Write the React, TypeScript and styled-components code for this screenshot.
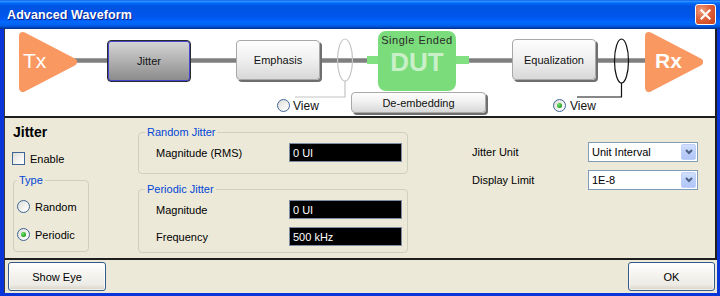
import React from 'react';
import styled, { createGlobalStyle, css } from 'styled-components';

const GlobalStyle = createGlobalStyle`
  * {
    box-sizing: border-box;
  }
  html, body {
    margin: 0;
    padding: 0;
  }
  body {
    width: 720px;
    height: 296px;
    overflow: hidden;
    font-family: "Liberation Sans", Arial, sans-serif;
    font-size: 11px;
    color: #000;
    background: #0831d9;
  }
`;

const Window = styled.div`
  width: 720px;
  height: 296px;
  display: flex;
  flex-direction: column;
`;

const TitleBar = styled.div`
  flex: none;
  height: 29px;
  display: flex;
  align-items: center;
  justify-content: space-between;
  padding: 0 4px 0 7px;
  background: linear-gradient(
    to bottom,
    #0058ee 0%,
    #3593ff 4%,
    #288eff 6%,
    #127dff 8%,
    #036ffc 10%,
    #0262ee 14%,
    #0057e5 20%,
    #0054e3 24%,
    #0055eb 56%,
    #005bf5 66%,
    #026afe 76%,
    #0062ef 86%,
    #0052d6 92%,
    #0040ab 96%,
    #003092 100%
  );
`;

const Title = styled.span`
  color: #fff;
  font-size: 12.5px;
  font-weight: bold;
  letter-spacing: 0.1px;
  text-shadow: 1px 1px 0 #0f1f80;
`;

const CloseButton = styled.div`
  width: 21px;
  height: 21px;
  border: 1px solid #fff;
  border-radius: 3px;
  background: radial-gradient(circle at 30% 30%, #f0a080 0%, #e0613a 45%, #c7401a 100%);
  display: flex;
  align-items: center;
  justify-content: center;
`;

const Frame = styled.div`
  flex: 1;
  display: flex;
  flex-direction: column;
  padding: 0 3px 3px 4px;
  background: #0a35d8;
`;

const panelEdges = css`
  border-left: 1px solid #3a3a3a;
  border-right: 2px solid #1e1e1e;
`;

const Diagram = styled.div`
  ${panelEdges};
  position: relative;
  flex: none;
  height: 89px;
  background: #fff;
  border-bottom: 2px solid #1e1e1e;
  overflow: hidden;
`;

type At = { $x: number; $y: number };

const placed = css<At>`
  position: absolute;
  left: ${(p) => p.$x}px;
  top: ${(p) => p.$y}px;
`;

const Wires = styled.svg`
  position: absolute;
  left: 0;
  top: 0;
`;

const Arrow = styled.svg<At>`
  ${placed};
`;

const BlockButton = styled.div<At & { $w: number; $h: number; $active?: boolean }>`
  ${placed};
  width: ${(p) => p.$w}px;
  height: ${(p) => p.$h}px;
  display: flex;
  align-items: center;
  justify-content: center;
  font-size: 11px;
  color: #111;
  border-radius: 4px;
  ${(p) =>
    p.$active
      ? css`
          background: linear-gradient(to bottom, #d6d6d6 0%, #b4b4b4 45%, #8a8a8a 100%);
          border: 1px solid #2a2a2a;
          box-shadow: inset 0 0 0 1px #4646d6;
        `
      : css`
          background: linear-gradient(to bottom, #fdfdfd 0%, #f1f1f1 45%, #d8d8d8 100%);
          border: 1px solid #a8a8a8;
          box-shadow: 2px 2px 0 #6f6f6f;
        `}
`;

const DutBox = styled.div<At>`
  ${placed};
  width: 78px;
  height: 60px;
  border-radius: 8px;
  background: #7bdc7b;
  display: flex;
  flex-direction: column;
  align-items: center;
  padding-top: 3px;
`;

const DutCaption = styled.span`
  font-size: 11px;
  line-height: 13px;
  letter-spacing: 0.5px;
  color: #2a2a2a;
`;

const DutName = styled.span`
  font-size: 26px;
  line-height: 30px;
  font-weight: bold;
  color: rgba(255, 255, 255, 0.6);
`;

const ViewOption = styled.label<At & { $gap: number }>`
  ${placed};
  display: flex;
  align-items: center;
  gap: ${(p) => p.$gap}px;
  height: 13px;
  font-size: 12px;
  color: #111;
`;

const RadioDot = styled.span<{ $checked?: boolean }>`
  flex: none;
  width: 13px;
  height: 13px;
  border-radius: 50%;
  border: 1px solid #3f6496;
  background: linear-gradient(135deg, #dcdcd7 0%, #f4f4f1 60%, #ffffff 100%);
  display: flex;
  align-items: center;
  justify-content: center;

  &::after {
    content: '';
    display: ${(p) => (p.$checked ? 'block' : 'none')};
    width: 5px;
    height: 5px;
    border-radius: 50%;
    background: radial-gradient(circle at 35% 35%, #6fe36f 0%, #21a121 70%);
  }
`;

const Settings = styled.div`
  ${panelEdges};
  flex: none;
  height: 142px;
  display: grid;
  grid-template-columns: 126px 334px 1fr;
  align-items: start;
  padding: 6px 0 0 7px;
  background: #ece9d8;
  border-bottom: 2px solid #1e1e1e;
`;

const Column = styled.div<{ $top: number; $gap?: number }>`
  display: flex;
  flex-direction: column;
  align-items: flex-start;
  margin-top: ${(p) => p.$top}px;
  gap: ${(p) => p.$gap ?? 0}px;
`;

const Heading = styled.div`
  font-size: 14px;
  line-height: 16px;
  font-weight: bold;
  padding-left: 1px;
`;

const CheckRow = styled.label`
  display: flex;
  align-items: center;
  gap: 5px;
  height: 13px;
  margin-top: 12px;
`;

const CheckBox = styled.span`
  width: 13px;
  height: 13px;
  border: 1px solid #3f6496;
  background: linear-gradient(135deg, #dcdcd7 0%, #f4f4f1 60%, #ffffff 100%);
`;

const GroupBox = styled.fieldset<{ $w: number; $h: number; $top?: number; $left?: number }>`
  margin: ${(p) => p.$top ?? 0}px 0 0 ${(p) => p.$left ?? 0}px;
  padding: 0;
  min-width: 0;
  width: ${(p) => p.$w}px;
  height: ${(p) => p.$h}px;
  border: 1px solid #d0d0bf;
  border-radius: 4px;
`;

const GroupLegend = styled.legend<{ $ml: number }>`
  margin-left: ${(p) => p.$ml}px;
  padding: 0 2px;
  font-size: 11px;
  line-height: 14px;
  color: #0046d5;
`;

const GroupBody = styled.div<{ $pad: string; $gap: number }>`
  display: flex;
  flex-direction: column;
  gap: ${(p) => p.$gap}px;
  padding: ${(p) => p.$pad};
`;

const RadioRow = styled.label`
  display: flex;
  align-items: center;
  gap: 5px;
  height: 13px;
`;

const FieldRow = styled.div<{ $label: number; $field: number; $h: number }>`
  display: grid;
  grid-template-columns: ${(p) => p.$label}px ${(p) => p.$field}px;
  align-items: center;
  height: ${(p) => p.$h}px;
`;

const ValueField = styled.div`
  height: 19px;
  display: flex;
  align-items: center;
  padding-left: 3px;
  background: #000;
  color: #fff;
  border: 1px solid #7d8ca3;
`;

const Combo = styled.div`
  height: 20px;
  display: flex;
  align-items: center;
  background: #fff;
  border: 1px solid #7f9db9;
  padding: 1px 1px 1px 3px;
`;

const ComboText = styled.span`
  flex: 1;
`;

const ComboButton = styled.span`
  flex: none;
  width: 15px;
  height: 16px;
  border: 1px solid #bdd0f9;
  border-radius: 2px;
  background: linear-gradient(to bottom, #d2e0fd 0%, #bccffa 50%, #b0c6f6 100%);
  display: flex;
  align-items: center;
  justify-content: center;
`;

const ButtonBar = styled.div`
  border-left: 1px solid #3a3a3a;
  flex: 1;
  display: flex;
  align-items: center;
  justify-content: space-between;
  padding: 0 2px 0 3px;
  background: #ece9d8;
`;

const PushButton = styled.button<{ $w: number }>`
  width: ${(p) => p.$w}px;
  height: 29px;
  padding: 0;
  font-family: "Liberation Sans", Arial, sans-serif;
  font-size: 11px;
  color: #000;
  border: 1px solid #36598c;
  border-radius: 3px;
  background: linear-gradient(to bottom, #ffffff 0%, #f5f4f0 40%, #ecebe5 80%, #d8d2c6 100%);
  box-shadow: inset 0 0 0 1px rgba(255, 255, 255, 0.7);
`;

const Chevron = () => (
  <svg width="8" height="6" viewBox="0 0 8 6">
    <polyline points="1,1 4,4 7,1" fill="none" stroke="#4d6185" strokeWidth="2" />
  </svg>
);

const Triangle = ({ x, y, label, bold, tx }: { x: number; y: number; label: string; bold?: boolean; tx: number }) => (
  <Arrow $x={x} $y={y} width="58" height="60" viewBox="0 0 58 60">
    <polygon points="4,4 54,30 4,56" fill="#fa9862" stroke="#fa9862" strokeWidth="8" strokeLinejoin="round" />
    <text
      x={tx}
      y="36"
      fill="#fff"
      fontSize="21"
      fontWeight={bold ? 'bold' : 'normal'}
      fontFamily='"Liberation Sans", Arial, sans-serif'
    >
      {label}
    </text>
  </Arrow>
);

export default function App() {
  return (
    <Window>
      <GlobalStyle />
      <TitleBar>
        <Title>Advanced Waveform</Title>
        <CloseButton>
          <svg width="11" height="11" viewBox="0 0 11 11">
            <path d="M1.5 1.5 L9.5 9.5 M9.5 1.5 L1.5 9.5" stroke="#fff" strokeWidth="2.2" strokeLinecap="square" />
          </svg>
        </CloseButton>
      </TitleBar>
      <Frame>
        <Diagram>
          <Wires width="710" height="87" viewBox="0 0 710 87">
            <line x1="60" y1="31.5" x2="650" y2="31.5" stroke="#7f7f7f" strokeWidth="4.5" />
            <ellipse cx="340" cy="31" rx="7.5" ry="21" fill="none" stroke="#c4c4c4" strokeWidth="1.2" />
            <polyline points="340,52 340,68 290,68" fill="none" stroke="#c4c4c4" strokeWidth="1.2" />
            <ellipse cx="616.5" cy="32" rx="7" ry="22" fill="none" stroke="#111" strokeWidth="1.2" />
            <polyline points="616.5,54 616.5,68 572,68" fill="none" stroke="#111" strokeWidth="1.2" />
            <rect x="362" y="27" width="12" height="8" fill="#82e082" />
            <rect x="450" y="27" width="14" height="8" fill="#82e082" />
          </Wires>
          <Triangle x={14} y={3} label="Tx" tx={4} />
          <BlockButton $x={102} $y={11} $w={84} $h={42} $active>
            Jitter
          </BlockButton>
          <BlockButton $x={231} $y={11} $w={84} $h={40}>
            Emphasis
          </BlockButton>
          <ViewOption $x={272} $y={70} $gap={3}>
            <RadioDot />
            View
          </ViewOption>
          <DutBox $x={373} $y={2}>
            <DutCaption>Single Ended</DutCaption>
            <DutName>DUT</DutName>
          </DutBox>
          <BlockButton $x={346} $y={63} $w={135} $h={21}>
            De-embedding
          </BlockButton>
          <BlockButton $x={507} $y={10} $w={84} $h={41}>
            Equalization
          </BlockButton>
          <ViewOption $x={548} $y={70} $gap={4}>
            <RadioDot $checked />
            View
          </ViewOption>
          <Triangle x={640} y={3} label="Rx" bold tx={10} />
        </Diagram>

        <Settings>
          <Column $top={0}>
            <Heading>Jitter</Heading>
            <CheckRow>
              <CheckBox />
              Enable
            </CheckRow>
            <GroupBox $w={76} $h={79} $top={8} $left={1}>
              <GroupLegend $ml={3}>Type</GroupLegend>
              <GroupBody $pad="13px 0 0 3px" $gap={15}>
                <RadioRow>
                  <RadioDot />
                  Random
                </RadioRow>
                <RadioRow>
                  <RadioDot $checked />
                  Periodic
                </RadioRow>
              </GroupBody>
            </GroupBox>
          </Column>

          <Column $top={1}>
            <GroupBox $w={270} $h={49}>
              <GroupLegend $ml={6}>Random Jitter</GroupLegend>
              <GroupBody $pad="4px 4px 0 17px" $gap={8}>
                <FieldRow $label={133} $field={113} $h={19}>
                  <span>Magnitude (RMS)</span>
                  <ValueField>0 UI</ValueField>
                </FieldRow>
              </GroupBody>
            </GroupBox>
            <GroupBox $w={270} $h={71} $top={8}>
              <GroupLegend $ml={6}>Periodic Jitter</GroupLegend>
              <GroupBody $pad="4px 4px 0 17px" $gap={8}>
                <FieldRow $label={133} $field={113} $h={19}>
                  <span>Magnitude</span>
                  <ValueField>0 UI</ValueField>
                </FieldRow>
                <FieldRow $label={133} $field={113} $h={19}>
                  <span>Frequency</span>
                  <ValueField>500 kHz</ValueField>
                </FieldRow>
              </GroupBody>
            </GroupBox>
          </Column>

          <Column $top={18} $gap={8}>
            <FieldRow $label={116} $field={110} $h={20}>
              <span>Jitter Unit</span>
              <Combo>
                <ComboText>Unit Interval</ComboText>
                <ComboButton>
                  <Chevron />
                </ComboButton>
              </Combo>
            </FieldRow>
            <FieldRow $label={116} $field={110} $h={20}>
              <span>Display Limit</span>
              <Combo>
                <ComboText>1E-8</ComboText>
                <ComboButton>
                  <Chevron />
                </ComboButton>
              </Combo>
            </FieldRow>
          </Column>
        </Settings>

        <ButtonBar>
          <PushButton $w={98}>Show Eye</PushButton>
          <PushButton $w={87}>OK</PushButton>
        </ButtonBar>
      </Frame>
    </Window>
  );
}
